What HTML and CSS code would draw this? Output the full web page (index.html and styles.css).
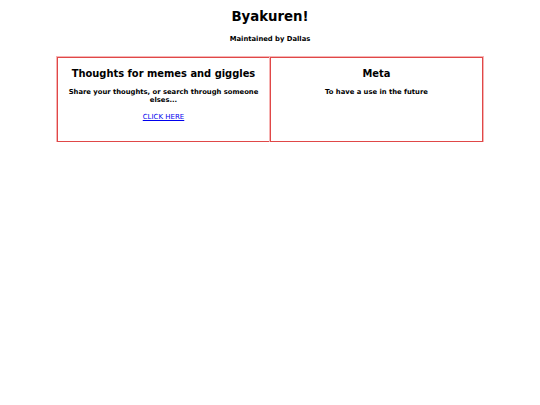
FILE: index.html
```html
<!DOCTYPE html>
<html>
<head>
<meta charset="utf-8">
<link rel="stylesheet" href="styles.css">
</head>
<body>
<header class="top">
  <h1 class="title">Byakuren!</h1>
  <p class="sub">Maintained by Dallas</p>
</header>
<main class="cards">
  <section class="card">
    <h2 class="card-title">Thoughts for memes and giggles</h2>
    <p class="card-text">Share your thoughts, or search through someone elses...</p>
    <p class="card-more"><a class="card-link" href="#">CLICK HERE</a></p>
  </section>
  <section class="card">
    <h2 class="card-title">Meta</h2>
    <p class="card-text">To have a use in the future</p>
  </section>
</main>
</body>
</html>
```

FILE: styles.css
```css
html, body {
  margin: 0;
  padding: 0;
  background: #fff;
}
body {
  font-family: "DejaVu Sans", Verdana, sans-serif;
  color: #000;
  text-align: center;
}
.top {
  padding-top: 9px;
}
.title {
  margin: 0;
  font-size: 13.3px;
  font-weight: bold;
  line-height: 16px;
}
.sub {
  margin: 10px 0 0;
  font-size: 6.8px;
  font-weight: bold;
  line-height: 8px;
}
.cards {
  display: flex;
  width: 426px;
  margin: 14px auto 0;
}
.card {
  flex: 1;
  height: 83px;
  border: 1px solid #e04848;
  box-shadow: 0 0 0 1px #f6b4b4;
  padding: 0 8px;
  font-size: 7px;
  line-height: 8px;
}
.card-title {
  margin: 9px 0 0;
  font-family: "DejaVu Sans Condensed", "DejaVu Sans", sans-serif;
  font-size: 11px;
  line-height: 13px;
  font-weight: bold;
}
.card-text {
  margin: 8px 0 0;
  font-size: 6.8px;
  line-height: 8px;
  font-weight: bold;
}
.card-more {
  margin: 9px 0 0;
  font-size: 7px;
  line-height: 8px;
}
.card-link {
  color: #0000ee;
}
```
